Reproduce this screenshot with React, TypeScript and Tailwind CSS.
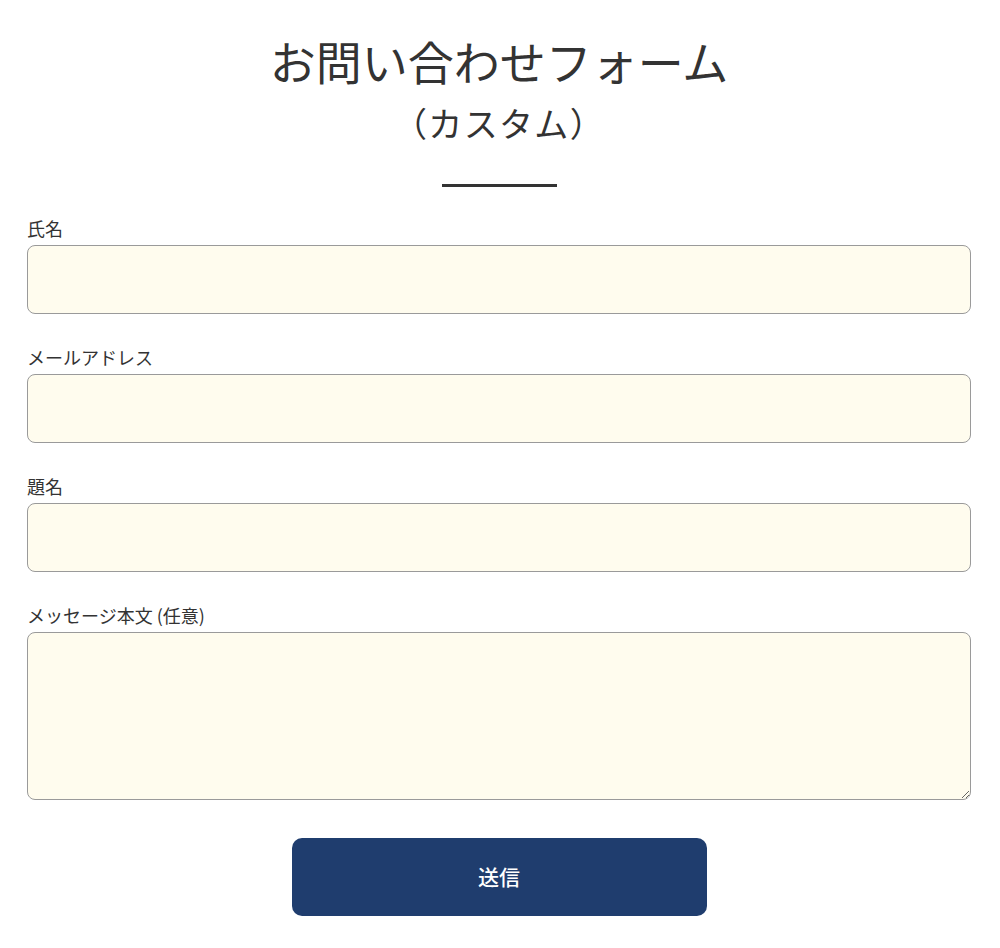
export default function App() {
  const fields = ["氏名", "メールアドレス", "題名"]
  return (
    <div className="min-h-screen bg-white pl-[27px] pr-[29px] pt-[30px] pb-8 text-[#333] font-['Noto_Sans_CJK_JP','Noto_Sans',sans-serif]">
      <div className="flex flex-col items-center">
        <h1 className="text-[46px] leading-[60px] font-normal">お問い合わせフォーム</h1>
        <p className="mt-[3px] text-[34px] leading-[60px] tracking-[0.04em]">（カスタム）</p>
        <div className="mt-[31px] h-[3px] w-[115px] bg-[#333]" />
      </div>

      <form className="mt-[29px] flex flex-col gap-[31px]" onSubmit={(e) => e.preventDefault()}>
        {fields.map((label) => (
          <div key={label} className="flex flex-col">
            <label className="text-[18px] leading-[24px] mb-[5px]">{label}</label>
            <input className="h-[69px] w-full rounded-[8px] border border-[#9a9a9a] bg-[#fffcee] px-3 outline-none" />
          </div>
        ))}
        <div className="flex flex-col">
          <label className="text-[18px] leading-[24px] mb-[5px]">メッセージ本文 (任意)</label>
          <textarea className="h-[168px] w-full rounded-[8px] border border-[#9a9a9a] bg-[#fffcee] px-3 py-2 outline-none" />
        </div>
        <div className="mt-[7px] flex justify-center">
          <button
            type="submit"
            className="h-[78px] w-[415px] rounded-[10px] bg-[#1f3d6e] text-[21px] font-medium text-white"
          >
            送信
          </button>
        </div>
      </form>
    </div>
  )
}
